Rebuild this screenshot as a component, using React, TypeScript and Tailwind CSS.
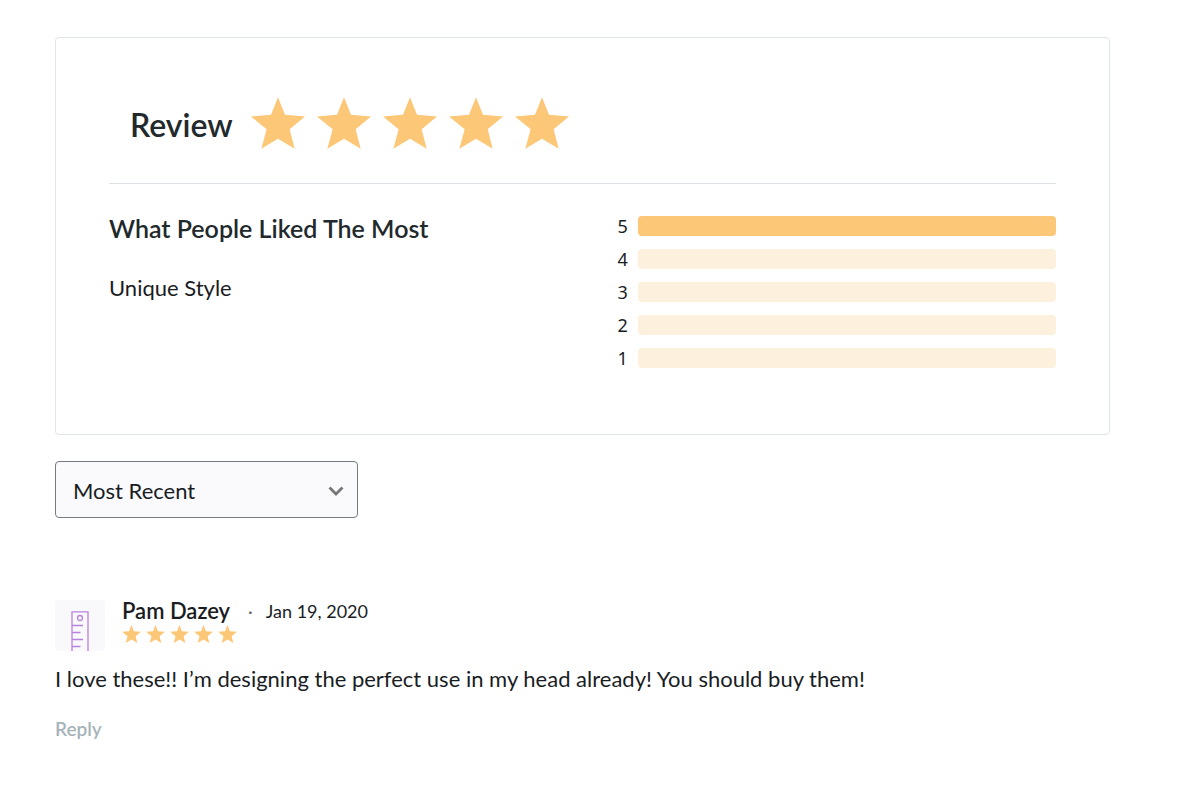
import React from 'react';

type StarsProps = {
	label: string;
	className: string;
	starClassName: string;
};

type RatingBarProps = {
	rating: number;
	filled: boolean;
};

type ReviewItemProps = {
	author: string;
	date: string;
	body: string;
};

const ratings = [5, 4, 3, 2, 1];

const Stars = ({ label, className, starClassName }: StarsProps) => (
	<div className={className} role="img" aria-label={label}>
		{[1, 2, 3, 4, 5].map((star) => (
			<svg key={star} className={starClassName} viewBox="0 0 162 155" fill="#fcc777" aria-hidden="true">
				<path d="M81 0L102 53L162 58L116 96L131 155L81 125L31 155L47 96L0 58L60 53Z" />
			</svg>
		))}
	</div>
);

const RatingBar = ({ rating, filled }: RatingBarProps) => (
	<li className="flex h-5 items-center">
		<span className="w-5 font-['Noto_Sans',sans-serif] text-[18px] leading-5">{rating}</span>
		<div className={filled ? 'h-5 flex-1 rounded bg-[#fcc777]' : 'h-5 flex-1 rounded bg-[#fdf0dc]'} />
	</li>
);

const RulerIcon = () => (
	<svg className="h-10 w-[18px]" viewBox="0 0 18 40" fill="none" stroke="#b883dd" strokeWidth="1.3" aria-hidden="true">
		<path d="M1 40V.8H17V40M1 14.5H12M1 21.5H9.5M1 28.5H12M1 35.5H9.5" />
		<circle cx="9" cy="7" r="2.5" />
	</svg>
);

const ReviewItem = ({ author, date, body }: ReviewItemProps) => (
	<article className="mt-[82px]">
		<div className="flex">
			<div className="flex h-[51px] w-[50px] items-end justify-center rounded-sm bg-[#f9f9fc]">
				<RulerIcon />
			</div>
			<div className="ml-[17px]">
				<div className="flex h-[22px] items-center">
					<h3 className="text-[22px] font-semibold leading-[22px]">{author}</h3>
					<span className="ml-[18px] mr-[13px] text-[18px] leading-[22px] text-[#666]">·</span>
					<time className="text-[18px] leading-[22px]" dateTime="2020-01-19">{date}</time>
				</div>
				<Stars label="5 out of 5 stars" className="mt-[3px] flex gap-[5px]" starClassName="h-[18px] w-[19px]" />
			</div>
		</div>
		<p className="mt-3 text-[22px] leading-8">{body}</p>
		<button type="button" className="mt-5 text-[19px] font-semibold leading-7 text-[#a6b3b9]">Reply</button>
	</article>
);

const App = () => (
	<main className="min-h-screen bg-white pb-10 pl-[55px] pr-[90px] pt-[37px] font-['Lato',sans-serif] text-[#1a1d1f]">
		<section className="rounded border border-[#e0e5e8] px-[53px] pb-[66px] pt-[59px]">
			<div className="flex items-start border-b border-[#dde2e6] pb-[34px] pl-[21px] text-[#21292c]">
				<h1 className="pt-2 text-[32px] font-semibold leading-10">Review</h1>
				<Stars label="5 out of 5 stars" className="ml-[18px] flex gap-3" starClassName="h-[52px] w-[54px]" />
			</div>
			<div className="mt-8 grid grid-cols-2">
				<div>
					<h2 className="text-[25px] font-semibold leading-6 text-[#21292c]">What People Liked The Most</h2>
					<p className="mt-[34px] text-[22px] leading-7">Unique Style</p>
				</div>
				<ul className="flex flex-col gap-[13px] pl-[35px]">
					{ratings.map((rating) => (
						<RatingBar key={rating} rating={rating} filled={rating === 5} />
					))}
				</ul>
			</div>
		</section>

		<div className="relative mt-[26px] w-[303px]">
			<select
				className="h-[57px] w-full appearance-none rounded border border-[#747b82] bg-[#fafafd] pl-[17px] pr-10 pt-px text-[22px]"
				aria-label="Sort reviews"
			>
				<option>Most Recent</option>
			</select>
			<svg
				className="pointer-events-none absolute right-[14px] top-6 h-[11px] w-4"
				viewBox="0 0 16 11"
				fill="none"
				stroke="#767676"
				strokeWidth="2.8"
				aria-hidden="true"
			>
				<path d="M1.5 2.5L8 9L14.5 2.5" />
			</svg>
		</div>

		<ReviewItem
			author="Pam Dazey"
			date="Jan 19, 2020"
			body="I love these!! I’m designing the perfect use in my head already! You should buy them!"
		/>
	</main>
);

export default App;
